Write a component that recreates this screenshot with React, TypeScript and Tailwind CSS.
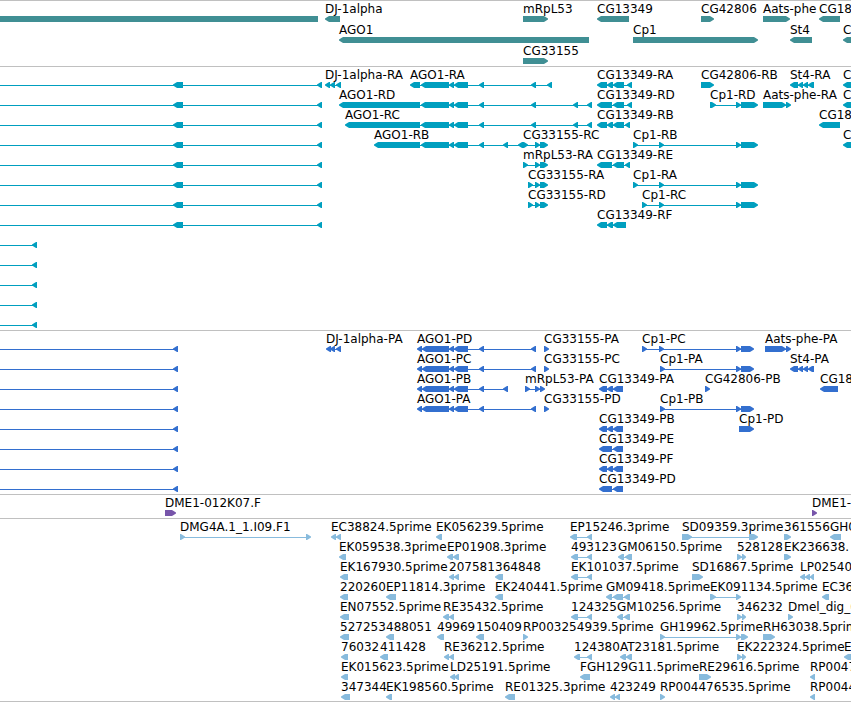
type Span = [number, number];

type Feature = {
  name: string;
  strand: 1 | -1;
  spans: Span[];
};

type TrackData = {
  id: string;
  fill: string;
  rowClass: string;
  rows: Feature[][];
};

const HEAD = 5;

const fwd = (name: string, ...spans: Span[]): Feature => ({ name, strand: 1, spans });
const rev = (name: string, ...spans: Span[]): Feature => ({ name, strand: -1, spans });

// Exon sets that several isoforms share
const ago1: Span[] = [[421, 449], [449, 454], [454, 468], [479, 484]];
const ago1Cds: Span[] = [[417, 422], [422, 449], [449, 454], [454, 468], [479, 484]];
const cp1End: Span[] = [[736, 741], [741, 758]];
const cp1CdsEnd: Span[] = [[736, 741], [741, 754]];
const mrpEnd: Span[] = [[535, 540], [540, 548]];
const st4: Span[] = [[790, 798], [798, 803], [803, 808], [808, 814]];
const cg13349Long: Span[] = [[599, 607], [607, 613], [613, 623]];
const cg13349Short: Span[] = [[599, 612], [613, 623]];

const longTranscript = rev("", [-20, -10], [173, 183], [317, 322]);
const shortTranscript = rev("", [-20, -10], [32, 37]);
const longProtein = rev("", [-20, -10], [173, 178]);

const tracks: TrackData[] = [
  {
    id: "genes",
    fill: "fill-[#408f94]",
    rowClass: "h-[21px]",
    rows: [
      [
        rev("", [-20, 318]),
        rev("DJ-1alpha", [325, 340]),
        fwd("mRpL53", [523, 548]),
        rev("CG13349", [597, 629]),
        fwd("CG42806", [701, 714]),
        fwd("Aats-phe", [763, 790]),
        rev("CG18", [819, 840]),
      ],
      [
        rev("AGO1", [339, 589]),
        fwd("Cp1", [633, 758]),
        rev("St4", [790, 812]),
        rev("C", [843, 860]),
      ],
      [fwd("CG33155", [523, 548])],
    ],
  },
  {
    id: "transcripts",
    fill: "fill-[#009fbf]",
    rowClass: "h-5",
    rows: [
      [
        longTranscript,
        rev("DJ-1alpha-RA", [325, 330], [330, 335], [336, 341]),
        rev("AGO1-RA", [410, 420], ...ago1, [531, 536], [547, 552]),
        rev("CG13349-RA", [597, 607], [607, 613], [613, 624], [627, 632]),
        fwd("CG42806-RB", [701, 714]),
        rev("St4-RA", ...st4),
        rev("C", [843, 860]),
      ],
      [
        longTranscript,
        rev("AGO1-RD", [339, 420], ...ago1, [531, 536], [573, 578], [587, 592]),
        rev("CG13349-RD", [597, 612], [613, 624], [627, 632]),
        fwd("Cp1-RD", [710, 716], ...cp1End),
        fwd("Aats-phe-RA", [763, 786], [786, 791]),
        rev("C", [843, 860]),
      ],
      [
        longTranscript,
        rev("AGO1-RC", [345, 420], ...ago1, [531, 536], [573, 578], [587, 592]),
        rev("CG13349-RB", [597, 607], [607, 613], [613, 624], [625, 630]),
        rev("CG18", [819, 840]),
      ],
      [
        longTranscript,
        rev("AGO1-RB", [374, 420], ...ago1, [503, 508], [518, 523]),
        fwd("CG33155-RC", [523, 528], ...mrpEnd),
        fwd("Cp1-RB", [633, 638], [659, 664], ...cp1End),
        rev("C", [843, 860]),
      ],
      [
        longTranscript,
        fwd("mRpL53-RA", [523, 528], ...mrpEnd),
        rev("CG13349-RE", [597, 612], [613, 624], [625, 630]),
      ],
      [
        longTranscript,
        fwd("CG33155-RA", [528, 533], ...mrpEnd),
        fwd("Cp1-RA", [633, 638], [659, 664], ...cp1End),
      ],
      [
        longTranscript,
        fwd("CG33155-RD", [528, 533], ...mrpEnd),
        fwd("Cp1-RC", [642, 647], [659, 664], ...cp1End),
      ],
      [longTranscript, rev("CG13349-RF", [597, 607], [607, 613], [613, 626])],
      [shortTranscript],
      [shortTranscript],
      [shortTranscript],
      [shortTranscript],
      [shortTranscript],
    ],
  },
  {
    id: "proteins",
    fill: "fill-[#336fcf]",
    rowClass: "h-5",
    rows: [
      [
        longProtein,
        rev("DJ-1alpha-PA", [326, 331], [330, 335], [336, 341]),
        rev("AGO1-PD", ...ago1Cds, [531, 536]),
        fwd("CG33155-PA", [544, 549]),
        fwd("Cp1-PC", [642, 647], [659, 664], ...cp1CdsEnd),
        fwd("Aats-phe-PA", [765, 786], [786, 791]),
      ],
      [
        longProtein,
        rev("AGO1-PC", ...ago1Cds, [531, 536]),
        fwd("CG33155-PC", [544, 549]),
        fwd("Cp1-PA", [660, 665], ...cp1CdsEnd),
        rev("St4-PA", ...st4),
      ],
      [
        longProtein,
        rev("AGO1-PB", ...ago1Cds, [503, 508]),
        fwd("mRpL53-PA", [525, 530], [535, 540], [540, 545]),
        rev("CG13349-PA", ...cg13349Long),
        fwd("CG42806-PB", [705, 710]),
        rev("CG18", [820, 838]),
      ],
      [
        longProtein,
        rev("AGO1-PA", ...ago1Cds, [531, 536]),
        fwd("CG33155-PD", [544, 549]),
        fwd("Cp1-PB", [660, 665], ...cp1CdsEnd),
      ],
      [longProtein, rev("CG13349-PB", ...cg13349Long), fwd("Cp1-PD", [739, 754])],
      [longProtein, rev("CG13349-PE", ...cg13349Short)],
      [longProtein, rev("CG13349-PF", ...cg13349Long)],
      [longProtein, rev("CG13349-PD", ...cg13349Short)],
    ],
  },
  {
    id: "clones",
    fill: "fill-[#7755aa]",
    rowClass: "h-5",
    rows: [[fwd("DME1-012K07.F", [165, 176]), fwd("DME1-", [812, 817])]],
  },
  {
    id: "ests",
    fill: "fill-[#88bbdd]",
    rowClass: "h-5",
    rows: [
      [
        fwd("DMG4A.1_1.I09.F1", [180, 185], [306, 311]),
        rev("EC38824.5prime", [331, 336], [336, 341]),
        rev("EK056239.5prime", [436, 442]),
        rev("EP15246.3prime", [570, 577], [587, 592]),
        fwd("SD09359.3prime", [682, 692], [749, 758]),
        fwd("361556", [784, 791]),
        rev("GH0", [830, 841]),
      ],
      [
        rev("EK059538.3prime", [339, 346]),
        rev("EP01908.3prime", [447, 453], [453, 459]),
        rev("493123", [571, 578], [587, 592]),
        rev("GM06150.5prime", [618, 624], [625, 632]),
        fwd("528128", [737, 742], [742, 746]),
        fwd("EK236638.", [784, 791]),
      ],
      [
        rev("EK167930.5prime", [340, 348]),
        rev("207581", [449, 454], [454, 459]),
        rev("364848", [495, 503]),
        rev("EK101037.5prime", [571, 578], [587, 592]),
        fwd("SD16867.5prime", [692, 703]),
        rev("LP02540", [800, 805], [805, 810], [810, 814]),
      ],
      [
        rev("220260", [340, 348]),
        rev("EP11814.3prime", [386, 396]),
        rev("EK240441.5prime", [495, 503]),
        rev("GM09418.5prime", [606, 612], [613, 623], [624, 630]),
        fwd("EK091134.5prime", [710, 716], [736, 741]),
        rev("EC36", [822, 829]),
      ],
      [
        rev("EN07552.5prime", [340, 349]),
        rev("RE35432.5prime", [443, 449], [449, 454]),
        rev("124325", [571, 578], [587, 592]),
        rev("GM10256.5prime", [617, 623], [624, 630]),
        fwd("346232", [737, 742], [742, 746]),
        fwd("Dmel_dig_0", [788, 793]),
      ],
      [
        rev("527253", [340, 349]),
        rev("488051", [386, 394]),
        rev("49969", [437, 444]),
        rev("150409", [476, 484]),
        fwd("RP003254939.5prime", [523, 528]),
        fwd("GH19962.5prime", [660, 665], [736, 741], [741, 748]),
        fwd("RH63038.5prime", [763, 775]),
      ],
      [
        rev("76032", [341, 348]),
        rev("411428", [380, 388]),
        rev("RE36212.5prime", [444, 449], [449, 454]),
        rev("124380", [574, 580], [587, 592]),
        rev("AT23181.5prime", [620, 626], [626, 632]),
        fwd("EK222324.5prime", [737, 742], [742, 746]),
        rev("E", [844, 860]),
      ],
      [
        rev("EK015623.5prime", [341, 348]),
        rev("LD25191.5prime", [450, 455], [454, 459]),
        rev("FGH129G11.5prime", [580, 590]),
        fwd("RE29616.5prime", [699, 711]),
        rev("RP0047", [810, 815]),
      ],
      [
        rev("347344", [341, 350]),
        rev("EK198560.5prime", [386, 392]),
        rev("RE01325.3prime", [505, 515]),
        rev("423249", [610, 615], [615, 620]),
        fwd("RP004476535.5prime", [660, 665]),
        rev("RP0044", [810, 815]),
      ],
    ],
  },
];

// A block with a blunt pointed end in the direction of its strand
function arrowPoints([start, end]: Span, strand: 1 | -1) {
  if (strand === 1) {
    const neck = Math.max(start, end - HEAD);
    return `${start},0 ${neck + 1},0 ${end},2.4 ${end},3.6 ${neck + 1},6 ${start},6`;
  }
  const neck = Math.min(end, start + HEAD);
  return `${end},0 ${neck - 1},0 ${start},2.4 ${start},3.6 ${neck - 1},6 ${end},6`;
}

function Glyph({ feature }: { feature: Feature }) {
  const { spans, strand } = feature;
  const from = spans[0][0] + 1;
  const to = spans[spans.length - 1][1] - 1;

  return (
    <g>
      {spans.length > 1 && <rect x={from} y={3} width={to - from} height={1} />}
      {spans.map((span, i) => (
        <polygon key={i} points={arrowPoints(span, strand)} />
      ))}
    </g>
  );
}

function Row({ features, fill, rowClass }: { features: Feature[]; fill: string; rowClass: string }) {
  return (
    <div className={`relative flex flex-col ${rowClass}`}>
      <div className="h-[15px] shrink-0">
        {features
          .filter((f) => f.name)
          .map((f) => (
            <span
              key={`${f.name}-${f.spans[0][0]}`}
              className="absolute top-0 leading-4 whitespace-nowrap"
              style={{ left: f.spans[0][0] }}
            >
              {f.name}
            </span>
          ))}
      </div>
      <svg className={`block h-1.5 w-full shrink-0 ${fill}`} aria-hidden="true">
        {features.map((f, i) => (
          <Glyph key={i} feature={f} />
        ))}
      </svg>
    </div>
  );
}

function Track({ track }: { track: TrackData }) {
  const pad = track.rowClass === "h-5" ? "pb-[3px] last:pb-0.5" : "pb-0.5";

  return (
    <section className={`border-t border-[#c0c0c0] ${pad}`}>
      {track.rows.map((features, i) => (
        <Row key={i} features={features} fill={track.fill} rowClass={track.rowClass} />
      ))}
    </section>
  );
}

function App() {
  return (
    <main className="w-full overflow-hidden border-b border-[#c0c0c0] bg-white font-['DejaVu_Sans',sans-serif] text-xs text-black">
      {tracks.map((track) => (
        <Track key={track.id} track={track} />
      ))}
    </main>
  );
}

export default App;
